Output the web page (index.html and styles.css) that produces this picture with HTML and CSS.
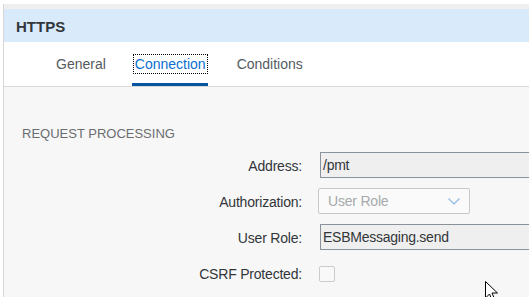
FILE: index.html
```html
<!DOCTYPE html>
<html>
<head>
<meta charset="utf-8">
<link rel="stylesheet" href="styles.css">
</head>
<body>
<div class="page">
  <div class="strip"></div>
  <div class="header">HTTPS</div>
  <div class="tabs">
    <div class="tab">General</div>
    <div class="tab active"><span class="focus">Connection</span></div>
    <div class="tab">Conditions</div>
  </div>
  <div class="content">
    <div class="section-title">REQUEST PROCESSING</div>
    <div class="form">
      <div class="label">Address:</div>
      <div class="field"><div class="input">/pmt</div></div>
      <div class="label">Authorization:</div>
      <div class="field"><div class="select"><span class="placeholder">User Role</span>
        <svg class="chev" width="12" height="7" viewBox="0 0 12 7"><path d="M0.5 0.5 L6 6 L11.5 0.5" fill="none" stroke="#8fb8e4" stroke-width="1.2"/></svg></div></div>
      <div class="label">User Role:</div>
      <div class="field"><div class="input">ESBMessaging.send</div></div>
      <div class="label">CSRF Protected:</div>
      <div class="field"><div class="checkbox"></div></div>
    </div>
  </div>
</div>
<svg class="cursor" width="14" height="22" viewBox="0 0 14 22"><path d="M0.5 0.5 L0.5 17 L4.5 13 L7.5 20 L10 19 L7 12 L12.5 12 Z" fill="#fff" stroke="#000" stroke-width="1"/></svg>
</body>
</html>
```
FILE: styles.css
```css
html, body {
  margin: 0;
  padding: 0;
  background: #ffffff;
  font-family: "Liberation Sans", Arial, sans-serif;
  overflow: hidden;
}
.page {
  margin-left: 3px;
  margin-top: 4px;
  border-left: 1px solid #d6d6d6;
  height: 293px;
  width: 526px;
  background: #f7f7f7;
  display: flex;
  flex-direction: column;
  overflow: hidden;
}
.strip {
  height: 5px;
  background: #efefef;
}
.header {
  height: 33px;
  background: #d9eafb;
  padding-left: 12px;
  font-size: 15px;
  font-weight: bold;
  color: #32363a;
  display: flex;
  align-items: center;
  padding-top: 1px;
  box-sizing: border-box;
}
.tabs {
  height: 45px;
  background: #ffffff;
  border-bottom: 1px solid #d9d9d9;
  display: flex;
  padding-left: 36px;
  box-sizing: border-box;
}
.tab {
  font-size: 14px;
  color: #555a5f;
  display: flex;
  align-items: center;
  padding: 3px 16px 0 16px;
  border-bottom: 3px solid transparent;
}
.tab.active {
  color: #0a6ed1;
  border-bottom-color: #0854a0;
  padding: 3px 2px 0 3px;
  margin: 0 13px 0 10px;
}
.focus {
  outline: 1px dotted #000;
  outline-offset: 1px;
  line-height: 16px;
}
.content {
  flex: 1;
  background: #f7f7f7;
  padding: 39px 0 0 18px;
}
.section-title {
  font-size: 13px;
  color: #6a6d70;
  line-height: 16px;
}
.form {
  margin-top: 10px;
  display: grid;
  grid-template-columns: 280px 1fr;
  column-gap: 16px;
  row-gap: 10px;
  grid-auto-rows: 26px;
}
.label {
  font-size: 14px;
  letter-spacing: -0.2px;
  color: #32363a;
  display: flex;
  align-items: center;
  justify-content: flex-end;
  padding-top: 1px;
}
.field {
  display: flex;
  align-items: center;
}
.input {
  box-sizing: border-box;
  height: 26px;
  width: 215px;
  margin-left: 2px;
  border: 1px solid #89919a;
  border-right: none;
  border-radius: 1px;
  background: #efefef;
  font-size: 14px;
  letter-spacing: -0.25px;
  color: #32363a;
  padding-left: 2px;
  display: flex;
  align-items: center;
}
.select {
  box-sizing: border-box;
  height: 26px;
  width: 152px;
  border: 1px solid #c8c8c8;
  border-radius: 2px;
  background: #fafafa;
  display: flex;
  align-items: center;
  justify-content: space-between;
  padding: 0 9px 0 9px;
}
.placeholder {
  font-size: 14px;
  letter-spacing: -0.2px;
  color: #a6a9ac;
}
.chev {
  display: block;
  margin-top: 1px;
}
.checkbox {
  box-sizing: border-box;
  width: 16px;
  height: 16px;
  margin-left: 1px;
  margin-top: 1px;
  border: 1px solid #c9cbcc;
  border-radius: 2px;
  background: #f9f9f9;
}
.cursor {
  position: absolute;
  left: 485px;
  top: 281px;
}
```
